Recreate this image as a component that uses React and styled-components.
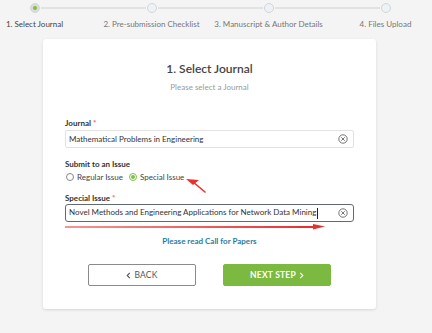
import React from 'react';
import styled, { createGlobalStyle } from 'styled-components';

const GlobalStyle = createGlobalStyle`
  html, body {
    margin: 0;
    padding: 0;
    background: #f4f4f4;
    overflow: hidden;
  }
  body {
    font-family: Lato, "Noto Sans", Arial, sans-serif;
    color: #333;
  }
`;

const Page = styled.div`
  width: 432px;
  height: 333px;
  padding-top: 3px;
  box-sizing: border-box;
`;

// Wizard steps
const Stepper = styled.div`
  display: grid;
  grid-template-columns: repeat(4, 117px);
  margin-left: -24px;
`;

const Step = styled.div`
  position: relative;
  display: flex;
  flex-direction: column;
  align-items: center;

  &:not(:last-child)::after {
    content: '';
    position: absolute;
    top: 4px;
    left: calc(50% + 6px);
    width: calc(100% - 12px);
    height: 2px;
    background: #e2e2e2;
  }
`;

const Dot = styled.span`
  width: 10px;
  height: 10px;
  border-radius: 50%;
  box-sizing: border-box;
  display: flex;
  align-items: center;
  justify-content: center;
  background: ${p => (p.$active ? '#dcdcdc' : '#eef2f5')};
  border: 1px solid ${p => (p.$active ? '#d6d6d6' : '#cfd6dc')};

  &::after {
    content: '';
    display: ${p => (p.$active ? 'block' : 'none')};
    width: 4px;
    height: 4px;
    border-radius: 50%;
    background: #7cc142;
  }
`;

const StepLabel = styled.span`
  margin-top: 5px;
  font-size: 8px;
  line-height: 12px;
  color: ${p => (p.$active ? '#444' : '#777')};
  white-space: nowrap;
`;

const Card = styled.div`
  position: relative;
  margin: 9px 0 0 43px;
  width: 333px;
  box-sizing: border-box;
  padding: 22px 22px 23px;
  background: #fff;
  border-radius: 3px;
  box-shadow: 0 1px 3px rgba(0, 0, 0, 0.12);
`;

const Title = styled.h1`
  margin: 0;
  text-align: center;
  font-size: 12px;
  line-height: 16px;
  font-weight: 600;
  color: #444;
`;

const Subtitle = styled.p`
  margin: 4px 0 24px;
  text-align: center;
  font-size: 8px;
  line-height: 12px;
  color: #999;
`;

const Label = styled.div`
  font-size: 8px;
  line-height: 12px;
  font-weight: 700;
  color: #333;
  margin-top: ${p => p.$gap || 0}px;
  margin-bottom: ${p => p.$after || 0}px;

  em {
    font-style: normal;
    color: #e66;
    margin-left: 2px;
  }
`;

const InputBox = styled.div`
  display: flex;
  align-items: center;
  height: 18px;
  box-sizing: border-box;
  padding: 0 5px 0 3px;
  border: 1px solid ${p => (p.$focused ? '#5f6a72' : '#e2e2e2')};
  border-radius: ${p => (p.$focused ? 3 : 2)}px;
  font-size: 8px;
  color: #333;
`;

const Value = styled.span`
  flex: 1;
  white-space: nowrap;
  overflow: hidden;
`;

const Caret = styled.span`
  display: inline-block;
  width: 1px;
  height: 11px;
  background: #222;
  vertical-align: middle;
  margin-left: 1px;
`;

const RadioRow = styled.div`
  display: flex;
  align-items: center;
  gap: 3px;
  margin-top: 1px;
  font-size: 8px;
  line-height: 12px;
  color: #444;
`;

const Radio = styled.span`
  width: 8px;
  height: 8px;
  box-sizing: border-box;
  border-radius: 50%;
  border: 1px solid ${p => (p.$checked ? '#7cc142' : '#888')};
  display: flex;
  align-items: center;
  justify-content: center;
  margin-left: ${p => p.$first ? 1 : 3}px;

  &::after {
    content: '';
    display: ${p => (p.$checked ? 'block' : 'none')};
    width: 4px;
    height: 4px;
    border-radius: 50%;
    background: #7cc142;
  }
`;

const Link = styled.a`
  display: block;
  margin-top: 13px;
  text-align: center;
  font-size: 8px;
  line-height: 12px;
  font-weight: 700;
  color: #2b7c9e;
  text-decoration: none;
`;

const Actions = styled.div`
  display: flex;
  justify-content: center;
  gap: 27px;
  margin-top: 17px;
`;

const Button = styled.button`
  width: 108px;
  height: 22px;
  box-sizing: border-box;
  border-radius: 2px;
  font-family: inherit;
  font-size: 8.5px;
  letter-spacing: 0.2px;
  display: flex;
  align-items: center;
  justify-content: center;
  gap: 3px;
  cursor: pointer;
  border: 1px solid ${p => (p.$primary ? '#7cb940' : '#8a8a8a')};
  background: ${p => (p.$primary ? '#7cb940' : '#fff')};
  color: ${p => (p.$primary ? '#fff' : '#555')};
  font-weight: ${p => (p.$primary ? 700 : 400)};
`;

const Overlay = styled.svg`
  position: absolute;
  left: 0;
  top: 0;
  pointer-events: none;
`;

const ClearIcon = () => (
  <svg width="10" height="10" viewBox="0 0 10 10">
    <circle cx="5" cy="5" r="4.2" fill="none" stroke="#666" strokeWidth="0.9" />
    <path d="M3.3 3.3 L6.7 6.7 M6.7 3.3 L3.3 6.7" stroke="#666" strokeWidth="0.9" />
  </svg>
);

const Chevron = ({ dir }) => (
  <svg width="5" height="7" viewBox="0 0 5 7">
    <path
      d={dir === 'left' ? 'M3.8 0.8 L1.2 3.5 L3.8 6.2' : 'M1.2 0.8 L3.8 3.5 L1.2 6.2'}
      fill="none"
      stroke="currentColor"
      strokeWidth="1.1"
    />
  </svg>
);

const steps = [
  '1. Select Journal',
  '2. Pre-submission Checklist',
  '3. Manuscript & Author Details',
  '4. Files Upload',
];

export default function App() {
  return (
    <Page>
      <GlobalStyle />
      <Stepper>
        {steps.map((s, i) => (
          <Step key={s}>
            <Dot $active={i === 0} />
            <StepLabel $active={i === 0}>{s}</StepLabel>
          </Step>
        ))}
      </Stepper>

      <Card>
        <Title>1. Select Journal</Title>
        <Subtitle>Please select a Journal</Subtitle>

        <Label $after={1}>
          Journal<em>*</em>
        </Label>
        <InputBox>
          <Value>Mathematical Problems in Engineering</Value>
          <ClearIcon />
        </InputBox>

        <Label $gap={10}>Submit to an Issue</Label>
        <RadioRow>
          <Radio $first />
          <span>Regular Issue</span>
          <Radio $checked />
          <span>Special Issue</span>
        </RadioRow>

        <Label $gap={9}>
          Special Issue<em>*</em>
        </Label>
        <InputBox $focused>
          <Value>
            Novel Methods and Engineering Applications for Network Data Mining
            <Caret />
          </Value>
          <ClearIcon />
        </InputBox>

        <Link href="#">Please read Call for Papers</Link>

        <Actions>
          <Button>
            <Chevron dir="left" />
            BACK
          </Button>
          <Button $primary>
            NEXT STEP
            <Chevron dir="right" />
          </Button>
        </Actions>

        {/* red annotation arrows */}
        <Overlay width="333" height="270" viewBox="0 0 333 270">
          <path d="M162 153 L150 143" stroke="#e8312f" strokeWidth="1.6" strokeLinecap="round" />
          <polygon points="143,140 156,141 150,146" fill="#e8312f" />
          <polygon points="22,187.6 272,187 272,189 22,188.4" fill="#e8312f" />
          <polygon points="282,187.5 270,185 270,190.5" fill="#e8312f" />
        </Overlay>
      </Card>
    </Page>
  );
}
